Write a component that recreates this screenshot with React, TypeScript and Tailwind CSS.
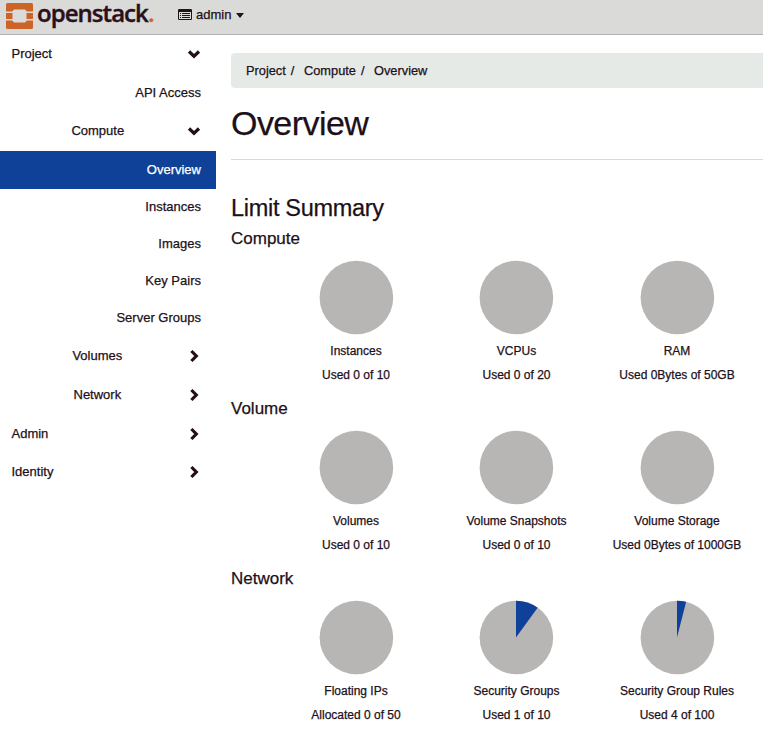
type NavItem = {
  label: string;
  level: 'top' | 'group' | 'leaf';
  height: string;
  state?: 'open' | 'closed' | 'active';
  indent?: string;
};

const nav: NavItem[] = [
  { label: 'Project', level: 'top', height: 'h-[38px]', state: 'open', indent: 'pl-[11.5px]' },
  { label: 'API Access', level: 'leaf', height: 'h-[39px]' },
  { label: 'Compute', level: 'group', height: 'h-[39px] pb-[2px]', state: 'open', indent: 'pl-[71.4px]' },
  { label: 'Overview', level: 'leaf', height: 'h-[38px]', state: 'active' },
  { label: 'Instances', level: 'leaf', height: 'h-[37px] pb-[2px]' },
  { label: 'Images', level: 'leaf', height: 'h-[37px] pb-[2px]' },
  { label: 'Key Pairs', level: 'leaf', height: 'h-[37px] pb-[2px]' },
  { label: 'Server Groups', level: 'leaf', height: 'h-[37px] pb-[2px]' },
  { label: 'Volumes', level: 'group', height: 'h-[39px] pb-[2px]', state: 'closed', indent: 'pl-[72.4px]' },
  { label: 'Network', level: 'group', height: 'h-[39px] pb-[2px]', state: 'closed', indent: 'pl-[73.5px]' },
  { label: 'Admin', level: 'top', height: 'h-[38px]', state: 'closed', indent: 'pl-[11.5px]' },
  { label: 'Identity', level: 'top', height: 'h-[39px] pb-[2px]', state: 'closed', indent: 'pl-[11.5px]' },
];

type Quota = { name: string; usage: string; percent: number };

const sections: { title: string; quotas: Quota[] }[] = [
  {
    title: 'Compute',
    quotas: [
      { name: 'Instances', usage: 'Used 0 of 10', percent: 0 },
      { name: 'VCPUs', usage: 'Used 0 of 20', percent: 0 },
      { name: 'RAM', usage: 'Used 0Bytes of 50GB', percent: 0 },
    ],
  },
  {
    title: 'Volume',
    quotas: [
      { name: 'Volumes', usage: 'Used 0 of 10', percent: 0 },
      { name: 'Volume Snapshots', usage: 'Used 0 of 10', percent: 0 },
      { name: 'Volume Storage', usage: 'Used 0Bytes of 1000GB', percent: 0 },
    ],
  },
  {
    title: 'Network',
    quotas: [
      { name: 'Floating IPs', usage: 'Allocated 0 of 50', percent: 0 },
      { name: 'Security Groups', usage: 'Used 1 of 10', percent: 10 },
      { name: 'Security Group Rules', usage: 'Used 4 of 100', percent: 4 },
    ],
  },
];

function Logo() {
  return (
    <svg width="27" height="26" viewBox="0 0 27 26" className="shrink-0" fill="#cc6428">
      <path d="M1.5 0h24A1.5 1.5 0 0 1 27 1.5V8.5H20.5V8L19 6.5H8L6.5 8V8.5H0V1.5A1.5 1.5 0 0 1 1.5 0Z" />
      <path d="M0 10h6.5v6H0ZM20.5 10H27v6h-6.5Z" />
      <path d="M0 17.5h6.5V18L8 19.5h11l1.5-1.5v-.5H27v7a1.5 1.5 0 0 1-1.5 1.5h-24A1.5 1.5 0 0 1 0 24.5Z" />
    </svg>
  );
}

function Chevron({ open }: { open: boolean }) {
  return (
    <svg width="14" height="14" viewBox="0 0 14 14" fill="none" stroke="#231018" strokeWidth="3.2">
      <path d={open ? 'M2 4.5 7 9.2 12 4.5' : 'M4.4 2 9.3 7 4.4 12'} />
    </svg>
  );
}

function Pie({ percent }: { percent: number }) {
  const angle = (percent / 100) * 2 * Math.PI;
  const x = 37 + 36.8 * Math.sin(angle);
  const y = 36.5 - 36.8 * Math.cos(angle);
  return (
    <svg width="74" height="74" viewBox="0 0 74 74" className="-ml-[0.5px] overflow-visible">
      <circle cx="37.4" cy="36.5" r="36.8" fill="#b7b6b5" />
      {percent > 0 && <path d={`M37 36.5V-.3A36.8 36.8 0 0 1 ${x} ${y}Z`} fill="#0f4198" />}
    </svg>
  );
}

function NavRow({ item }: { item: NavItem }) {
  const active = item.state === 'active';
  const leaf = item.level === 'leaf';
  return (
    <a
      className={`flex items-center pr-[15px] ${item.height} ${leaf ? 'justify-end' : 'justify-between'} ${
        item.indent ?? ''
      } ${active ? 'bg-[#0f4198] text-white' : ''}`}
    >
      <span>{item.label}</span>
      {!leaf && <Chevron open={item.state === 'open'} />}
    </a>
  );
}

export default function App() {
  return (
    <div className="h-[735px] w-[763px] overflow-hidden bg-white font-['Liberation_Sans',Arial,sans-serif] text-[13px] leading-[18px] text-[#1d1019] [-webkit-text-stroke:0.25px]">
      <header className="flex h-[35px] items-start border-b border-[#b2b2b0] bg-[#dadad8] pl-[6px]">
        <div className="flex pt-[3px]">
          <Logo />
          <span className="-mt-[4px] ml-[4px] w-[116px] whitespace-nowrap font-['Open_Sans',sans-serif] text-[24px] font-semibold leading-[28px] tracking-[-0.95px] text-[#2a101b] [-webkit-text-stroke:0.4px]">
            openstack<span className="text-[#cc6428]">.</span>
          </span>
        </div>
        <div className="flex items-center pl-[25px] pt-[6px]">
          <svg width="14" height="12" viewBox="0 0 14 12" fill="#231018">
            <path fillRule="evenodd" d="M1.2 0h11.6Q14 0 14 1.2v8.6q0 1.2-1.2 1.2H1.2Q0 11 0 9.8V1.2Q0 0 1.2 0ZM1 3v6.7q0 .3.3.3h11.4q.3 0 .3-.3V3Z" />
            <path d="M2 4h1v1H2ZM4 4h8v1H4ZM2 6h1v1H2ZM4 6h8v1H4ZM2 8h1v1H2ZM4 8h8v1H4Z" />
          </svg>
          <span className="ml-[4px] w-[36px] text-[13px]">admin</span>
          <svg className="ml-[4px]" width="8" height="5" viewBox="0 0 8 5" fill="#231018">
            <path d="M0 0h8L4 5Z" />
          </svg>
        </div>
      </header>
      <div className="flex">
        <nav className="w-[216px] shrink-0">
          {nav.map((item) => (
            <NavRow key={item.label} item={item} />
          ))}
        </nav>
        <main className="min-w-0 flex-1 pl-[15px] pt-[18px]">
          <ol className="flex h-[35px] items-center rounded-l-[4px] bg-[#e6eae7] pl-[15px] text-[12.8px]">
            <li className="flex w-[58px] gap-[5px]">Project<span>/</span></li>
            <li className="flex w-[70px] gap-[5px]">Compute<span>/</span></li>
            <li>Overview</li>
          </ol>
          <h1 className="mt-[15px] text-[34px] leading-[40px] tracking-[-0.55px]">Overview</h1>
          <hr className="mt-[16px] border-[#d9d9d7]" />
          <h2 className="mt-[33px] text-[23.5px] leading-[30px] tracking-[-0.3px]">Limit Summary</h2>
          {sections.map((section) => (
            <section key={section.title} className="flex h-[170px] flex-col pt-[6px]">
              <h3 className="text-[17px] leading-[20px]">{section.title}</h3>
              <div className="ml-[45px] mt-[12px] grid grid-cols-[160px_161px_160px] text-[12px]">
                {section.quotas.map((quota) => (
                  <div key={quota.name} className="flex flex-col items-center whitespace-nowrap">
                    <Pie percent={quota.percent} />
                    <div className="mt-[7px]">{quota.name}</div>
                    <div className="mt-[6px]">{quota.usage}</div>
                  </div>
                ))}
              </div>
            </section>
          ))}
        </main>
      </div>
    </div>
  );
}
